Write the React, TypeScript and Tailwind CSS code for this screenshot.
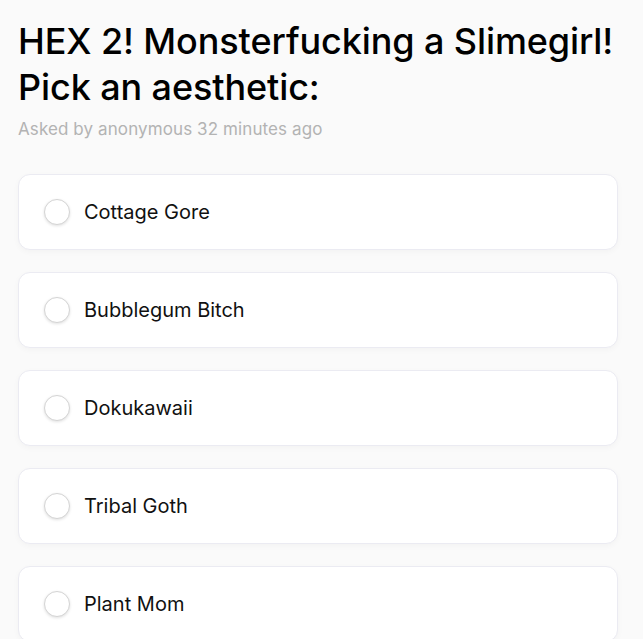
import React from "react";

const options = ["Cottage Gore", "Bubblegum Bitch", "Dokukawaii", "Tribal Goth", "Plant Mom"];

export default function App() {
  return (
    <div
      className="min-h-screen bg-[#fafafa] px-[18px] pt-[18px]"
      style={{ fontFamily: "Inter, 'Noto Sans', sans-serif" }}
    >
      <h1 className="text-[36px] leading-[46px] font-medium text-black tracking-[-0.1px]">
        HEX 2! Monsterfucking a Slimegirl! Pick an aesthetic:
      </h1>
      <p className="mt-[7px] text-[17px] leading-[24px] text-[#b3b3b3] tracking-[0.1px]">
        Asked by anonymous 32 minutes ago
      </p>
      <div className="mt-[33px] flex flex-col gap-[22px] w-[600px]">
        {options.map((o) => (
          <div
            key={o}
            className="h-[76px] flex items-center rounded-[12px] border border-[#ebebf2] bg-white shadow-[0_2px_6px_rgba(0,0,0,0.03)] pl-[25px]"
          >
            <span className="w-[26px] h-[26px] rounded-full border border-[#d4d4d4] bg-white shadow-[0_1px_3px_rgba(0,0,0,0.12)] shrink-0" />
            <span className="ml-[14px] text-[20px] text-[#111]">{o}</span>
          </div>
        ))}
      </div>
    </div>
  );
}
